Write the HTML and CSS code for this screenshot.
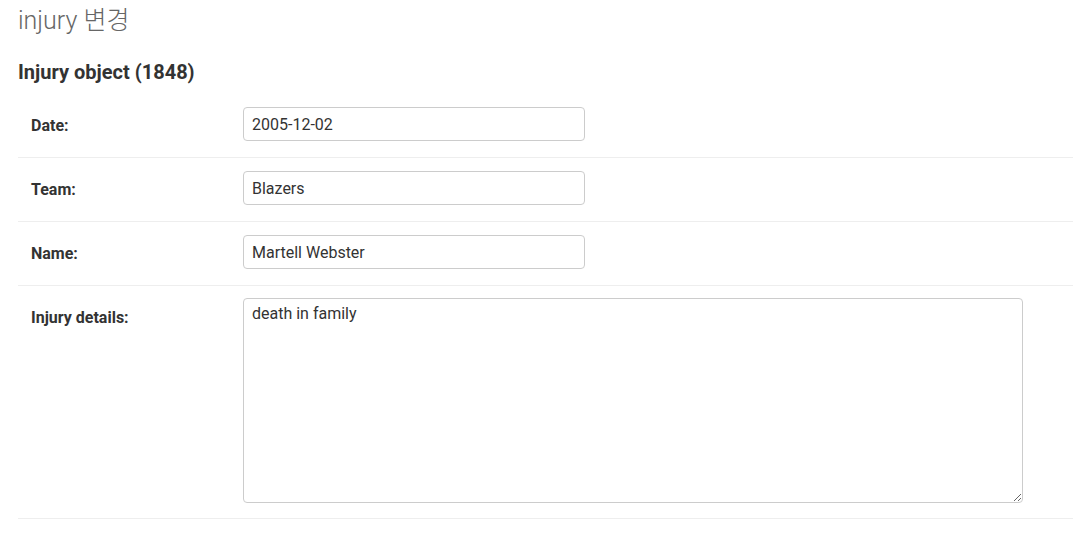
FILE: index.html
```html
<!DOCTYPE html>
<html lang="ko">
<head>
<meta charset="utf-8">
<title>injury 변경</title>
<link rel="stylesheet" href="styles.css">
</head>
<body>
<div class="content">
  <h1 class="page-title">injury 변경</h1>
  <h2 class="object-title">Injury object (1848)</h2>
  <form class="form">
    <div class="form-row">
      <label class="label" for="id_date">Date:</label>
      <input class="text-input" id="id_date" type="text" value="2005-12-02">
    </div>
    <div class="form-row">
      <label class="label" for="id_team">Team:</label>
      <input class="text-input" id="id_team" type="text" value="Blazers">
    </div>
    <div class="form-row">
      <label class="label" for="id_name">Name:</label>
      <input class="text-input" id="id_name" type="text" value="Martell Webster">
    </div>
    <div class="form-row form-row-last">
      <label class="label label-area" for="id_details">Injury details:</label>
      <textarea class="text-area" id="id_details">death in family</textarea>
    </div>
  </form>
</div>
</body>
</html>
```
FILE: styles.css
```css
html, body {
  margin: 0;
  padding: 0;
  background: #fff;
}
body {
  font-family: Roboto, "Noto Sans CJK KR", sans-serif;
  color: #333;
}
.content {
  padding-left: 18px;
}
.page-title {
  margin: 6px 0 0;
  font-size: 25px;
  line-height: 29px;
  font-weight: 300;
  color: #666;
}
.object-title {
  margin: 25px 0 0;
  font-size: 20px;
  line-height: 24px;
  font-weight: 700;
  color: #333;
}
.form {
  margin-top: 10px;
}
.form-row {
  display: flex;
  align-items: flex-start;
  padding: 13px 0 16px 13px;
  border-bottom: 1px solid #eee;
}
.form-row-last {
  padding-top: 12px;
  padding-bottom: 15px;
}
.label {
  width: 212px;
  flex: none;
  padding-top: 10px;
  font-size: 16px;
  line-height: 18px;
  font-weight: 700;
  color: #333;
}
.label-area {
  padding-top: 11px;
}
.text-input,
.text-area {
  box-sizing: border-box;
  margin: 0;
  border: 1px solid #ccc;
  border-radius: 4px;
  font-family: Roboto, sans-serif;
  font-size: 16px;
  color: #333;
  background: #fff;
}
.text-input {
  width: 342px;
  height: 34px;
  padding: 0 8px;
}
.text-area {
  width: 780px;
  height: 205px;
  display: block;
  resize: both;
  padding: 5px 8px 4px;
  line-height: normal;
}
```
